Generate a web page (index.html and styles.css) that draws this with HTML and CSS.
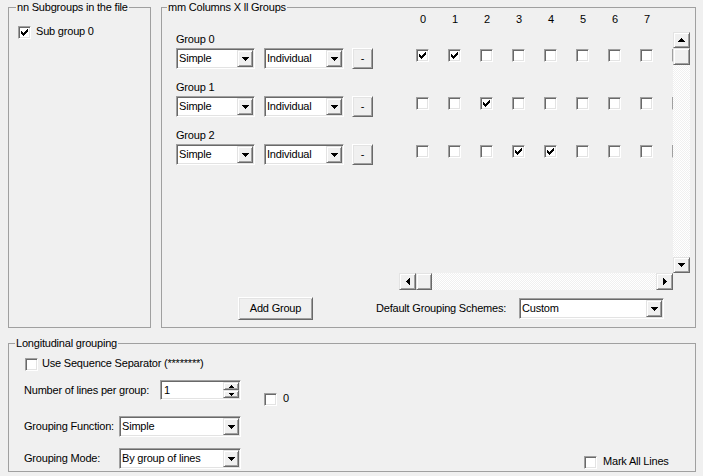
FILE: index.html
```html
<!DOCTYPE html>
<html>
<head>
<meta charset="utf-8">
<title>Grouping</title>
<link rel="stylesheet" href="styles.css">
</head>
<body>
<div class="top">
  <fieldset class="box sub">
    <legend>nn Subgroups in the file</legend>
    <div class="chk subchk"><span class="cb"><svg class="tick" viewBox="0 0 11 11"><path d="M2 4h1v3H2zM3 5h1v3H3zM4 6h1v3H4zM5 5h1v3H5zM6 4h1v3H6zM7 3h1v3H7zM8 2h1v3H8z"/></svg></span><span class="txt">Sub group 0</span></div>
  </fieldset>
  <fieldset class="box cols">
    <legend>mm Columns X ll Groups</legend>
    <div class="main">
      <div class="groups">
        <div class="group">
          <div class="glabel">Group 0</div>
          <div class="gctrl">
            <div class="combo c1"><span class="val">Simple</span><span class="drop"><svg class="ar" viewBox="0 0 7 4"><path d="M0 0h7v1H0zM1 1h5v1H1zM2 2h3v1H2zM3 3h1v1H3z"/></svg></span></div>
            <div class="combo c2"><span class="val">Individual</span><span class="drop"><svg class="ar" viewBox="0 0 7 4"><path d="M0 0h7v1H0zM1 1h5v1H1zM2 2h3v1H2zM3 3h1v1H3z"/></svg></span></div>
            <div class="btn minus">-</div>
          </div>
        </div>
        <div class="group">
          <div class="glabel">Group 1</div>
          <div class="gctrl">
            <div class="combo c1"><span class="val">Simple</span><span class="drop"><svg class="ar" viewBox="0 0 7 4"><path d="M0 0h7v1H0zM1 1h5v1H1zM2 2h3v1H2zM3 3h1v1H3z"/></svg></span></div>
            <div class="combo c2"><span class="val">Individual</span><span class="drop"><svg class="ar" viewBox="0 0 7 4"><path d="M0 0h7v1H0zM1 1h5v1H1zM2 2h3v1H2zM3 3h1v1H3z"/></svg></span></div>
            <div class="btn minus">-</div>
          </div>
        </div>
        <div class="group">
          <div class="glabel">Group 2</div>
          <div class="gctrl">
            <div class="combo c1"><span class="val">Simple</span><span class="drop"><svg class="ar" viewBox="0 0 7 4"><path d="M0 0h7v1H0zM1 1h5v1H1zM2 2h3v1H2zM3 3h1v1H3z"/></svg></span></div>
            <div class="combo c2"><span class="val">Individual</span><span class="drop"><svg class="ar" viewBox="0 0 7 4"><path d="M0 0h7v1H0zM1 1h5v1H1zM2 2h3v1H2zM3 3h1v1H3z"/></svg></span></div>
            <div class="btn minus">-</div>
          </div>
        </div>
      </div>
      <div class="matrix">
        <div class="head"><span>0</span><span>1</span><span>2</span><span>3</span><span>4</span><span>5</span><span>6</span><span>7</span></div>
        <div class="mbody">
          <div class="viewport">
            <div class="mrow">
              <span class="cell"><span class="cb"><svg class="tick" viewBox="0 0 11 11"><path d="M2 4h1v3H2zM3 5h1v3H3zM4 6h1v3H4zM5 5h1v3H5zM6 4h1v3H6zM7 3h1v3H7zM8 2h1v3H8z"/></svg></span></span>
              <span class="cell"><span class="cb"><svg class="tick" viewBox="0 0 11 11"><path d="M2 4h1v3H2zM3 5h1v3H3zM4 6h1v3H4zM5 5h1v3H5zM6 4h1v3H6zM7 3h1v3H7zM8 2h1v3H8z"/></svg></span></span>
              <span class="cell"><span class="cb"></span></span>
              <span class="cell"><span class="cb"></span></span>
              <span class="cell"><span class="cb"></span></span>
              <span class="cell"><span class="cb"></span></span>
              <span class="cell"><span class="cb"></span></span>
              <span class="cell"><span class="cb"></span></span>
              <span class="cell"><span class="cb"></span></span>
            </div>
            <div class="mrow">
              <span class="cell"><span class="cb"></span></span>
              <span class="cell"><span class="cb"></span></span>
              <span class="cell"><span class="cb"><svg class="tick" viewBox="0 0 11 11"><path d="M2 4h1v3H2zM3 5h1v3H3zM4 6h1v3H4zM5 5h1v3H5zM6 4h1v3H6zM7 3h1v3H7zM8 2h1v3H8z"/></svg></span></span>
              <span class="cell"><span class="cb"></span></span>
              <span class="cell"><span class="cb"></span></span>
              <span class="cell"><span class="cb"></span></span>
              <span class="cell"><span class="cb"></span></span>
              <span class="cell"><span class="cb"></span></span>
              <span class="cell"><span class="cb"></span></span>
            </div>
            <div class="mrow">
              <span class="cell"><span class="cb"></span></span>
              <span class="cell"><span class="cb"></span></span>
              <span class="cell"><span class="cb"></span></span>
              <span class="cell"><span class="cb"><svg class="tick" viewBox="0 0 11 11"><path d="M2 4h1v3H2zM3 5h1v3H3zM4 6h1v3H4zM5 5h1v3H5zM6 4h1v3H6zM7 3h1v3H7zM8 2h1v3H8z"/></svg></span></span>
              <span class="cell"><span class="cb"><svg class="tick" viewBox="0 0 11 11"><path d="M2 4h1v3H2zM3 5h1v3H3zM4 6h1v3H4zM5 5h1v3H5zM6 4h1v3H6zM7 3h1v3H7zM8 2h1v3H8z"/></svg></span></span>
              <span class="cell"><span class="cb"></span></span>
              <span class="cell"><span class="cb"></span></span>
              <span class="cell"><span class="cb"></span></span>
              <span class="cell"><span class="cb"></span></span>
            </div>
          </div>
          <div class="vscroll">
            <span class="sbtn vb"><svg class="ar" viewBox="0 0 7 4"><path d="M3 0h1v1H3zM2 1h3v1H2zM1 2h5v1H1zM0 3h7v1H0z"/></svg></span>
            <span class="sbtn vthumb"></span>
            <span class="track"></span>
            <span class="sbtn vb"><svg class="ar" viewBox="0 0 7 4"><path d="M0 0h7v1H0zM1 1h5v1H1zM2 2h3v1H2zM3 3h1v1H3z"/></svg></span>
          </div>
        </div>
        <div class="hscroll">
          <span class="sbtn hb"><svg class="arh" viewBox="0 0 4 7"><path d="M0 3h1v1H0zM1 2h1v3H1zM2 1h1v5H2zM3 0h1v7H3z"/></svg></span>
          <span class="sbtn hthumb"></span>
          <span class="track"></span>
          <span class="sbtn hb"><svg class="arh" viewBox="0 0 4 7"><path d="M0 0h1v7H0zM1 1h1v5H1zM2 2h1v3H2zM3 3h1v1H3z"/></svg></span>
        </div>
      </div>
    </div>
    <div class="foot">
      <div class="btn push">Add Group</div>
      <span class="flabel">Default Grouping Schemes:</span>
      <div class="combo c3"><span class="val">Custom</span><span class="drop"><svg class="ar" viewBox="0 0 7 4"><path d="M0 0h7v1H0zM1 1h5v1H1zM2 2h3v1H2zM3 3h1v1H3z"/></svg></span></div>
    </div>
  </fieldset>
</div>
<fieldset class="box long">
  <legend>Longitudinal grouping</legend>
  <div class="chk seqchk"><span class="cb"></span><span class="txt">Use Sequence Separator (********)</span></div>
  <div class="lrow r2">
    <div class="pair">
      <span class="lab w136">Number of lines per group:</span>
      <div class="spin"><span class="val">1</span><span class="spinbtns"><span class="sbtn sp"><svg class="ars" viewBox="0 0 5 3"><path d="M2 0h1v1H2zM1 1h3v1H1zM0 2h5v1H0z"/></svg></span><span class="sbtn sp"><svg class="ars" viewBox="0 0 5 3"><path d="M0 0h5v1H0zM1 1h3v1H1zM2 2h1v1H2z"/></svg></span></span></div>
    </div>
    <div class="chk zerochk"><span class="cb"></span><span class="txt">0</span></div>
  </div>
  <div class="lrow r3">
    <div class="pair">
      <span class="lab w95">Grouping Function:</span>
      <div class="combo c4"><span class="val">Simple</span><span class="drop"><svg class="ar" viewBox="0 0 7 4"><path d="M0 0h7v1H0zM1 1h5v1H1zM2 2h3v1H2zM3 3h1v1H3z"/></svg></span></div>
    </div>
  </div>
  <div class="lrow r4">
    <div class="pair">
      <span class="lab w95">Grouping Mode:</span>
      <div class="combo c4"><span class="val">By group of lines</span><span class="drop"><svg class="ar" viewBox="0 0 7 4"><path d="M0 0h7v1H0zM1 1h5v1H1zM2 2h3v1H2zM3 3h1v1H3z"/></svg></span></div>
    </div>
    <div class="chk markchk"><span class="cb"></span><span class="txt">Mark All Lines</span></div>
  </div>
</fieldset>
</body>
</html>
```

FILE: styles.css
```css
* { box-sizing: border-box; }
html, body { margin: 0; height: 100%; }
body {
  background: #f0f0f0;
  font: 11px/13px "Liberation Sans", Arial, sans-serif;
  letter-spacing: -0.2px;
  color: #000;
  overflow: hidden;
}

/* group boxes */
.top { display: flex; gap: 10px; padding: 1px 0 0 8px; }
.box { margin: 0; padding: 0; border: 1px solid #a0a0a0; min-width: 0; }
.box > legend { padding: 0 1px; line-height: 12px; }
.sub { width: 143px; height: 327px; }
.sub > legend { margin-left: 7px; }
.cols { width: 535px; height: 327px; }
.cols > legend { margin-left: 5px; }
.long { margin: 9px 0 0 8px; width: 688px; height: 135px; }
.long > legend { margin-left: 6px; }

/* checkbox */
.cb {
  width: 13px; height: 13px; flex: none; display: block;
  background: #fff;
  border: 1px solid; border-color: #a0a0a0 #fff #fff #a0a0a0;
  box-shadow: inset 1px 1px #696969, inset -1px -1px #e3e3e3;
}
.tick { display: block; width: 11px; height: 11px; fill: #000; shape-rendering: crispEdges; }
.chk { display: flex; align-items: flex-start; }
.chk .txt { margin-left: 5px; margin-top: -1px; white-space: nowrap; }
.subchk { margin: 13px 0 0 9px; }
.seqchk { margin: 9px 0 0 16px; }
.seqchk .txt { margin-left: 4px; }
.zerochk { margin: 13px 0 0 23px; }
.zerochk .txt { margin-left: 6px; }
.markchk { margin: 8px 0 0 343px; }
.markchk .txt { margin-left: 6px; }

/* combos */
.combo {
  display: flex; align-items: center; height: 21px; flex: none;
  background: #fff;
  border: 1px solid; border-color: #a0a0a0 #fff #fff #a0a0a0;
  box-shadow: inset 1px 1px #696969, inset -1px -1px #e3e3e3;
}
.combo .val { flex: 1; padding-left: 2px; white-space: nowrap; overflow: hidden; }
.drop {
  width: 16px; height: 17px; margin-right: 1px; flex: none;
  display: flex; align-items: center; justify-content: center;
  background: #f0f0f0;
  border: 1px solid; border-color: #e3e3e3 #696969 #696969 #e3e3e3;
  box-shadow: inset 1px 1px #fff, inset -1px -1px #a0a0a0;
}
.ar { width: 7px; height: 4px; display: block; fill: #000; shape-rendering: crispEdges; }
.arh { width: 4px; height: 7px; display: block; fill: #000; shape-rendering: crispEdges; }
.ars { width: 5px; height: 3px; display: block; fill: #000; shape-rendering: crispEdges; }
.c1 { width: 79px; }
.c2 { width: 80px; margin-left: 9px; }
.c3 { width: 145px; }
.c4 { width: 122px; }

/* buttons */
.btn {
  display: flex; align-items: center; justify-content: center; flex: none;
  background: #f0f0f0;
  border: 1px solid; border-color: #fff #696969 #696969 #fff;
  box-shadow: inset 1px 1px #e3e3e3, inset -1px -1px #a0a0a0;
}
.minus { width: 21px; height: 21px; margin-left: 8px; padding-bottom: 1px; }
.push { width: 75px; height: 23px; }

/* columns matrix */
.main { display: flex; padding-left: 14px; }
.groups { width: 223px; padding-top: 20px; flex: none; }
.group { margin-bottom: 12px; }
.glabel { height: 13px; margin-bottom: 2px; }
.gctrl { display: flex; }
.matrix { width: 291px; flex: none; }
.head { display: flex; width: 274px; height: 13px; overflow: hidden; padding-left: 8px; margin-bottom: 6px; }
.head span { width: 32px; flex: none; text-align: center; }
.mbody { display: flex; height: 241px; }
.viewport { width: 274px; height: 241px; overflow: hidden; padding: 17px 0 0 8px; flex: none; }
.mrow { display: flex; height: 48px; }
.cell { width: 32px; flex: none; padding-left: 9px; }

.sbtn {
  display: flex; align-items: center; justify-content: center; flex: none;
  background: #f0f0f0;
  border: 1px solid; border-color: #e3e3e3 #696969 #696969 #e3e3e3;
  box-shadow: inset 1px 1px #fff, inset -1px -1px #a0a0a0;
}
.track {
  flex: 1;
  background: repeating-conic-gradient(#fff 0 25%, #f0f0f0 0 50%) 0 0 / 2px 2px;
}
.vscroll { width: 17px; display: flex; flex-direction: column; }
.vb { height: 16px; }
.vthumb { height: 17px; }
.hscroll { width: 274px; height: 17px; display: flex; }
.hb { width: 17px; }
.hthumb { width: 16px; }

.foot { display: flex; align-items: center; margin-top: 7px; padding-left: 76px; }
.flabel { width: 143px; margin-left: 63px; white-space: nowrap; }

/* longitudinal */
.lrow { display: flex; align-items: flex-start; padding-left: 15px; }
.pair { display: flex; align-items: center; }
.r2 { margin-top: 9px; }
.r3 { margin-top: 10px; }
.r4 { margin-top: 11px; }
.lab { white-space: nowrap; flex: none; }
.w136 { width: 136px; }
.w95 { width: 95px; }
.spin {
  width: 81px; height: 20px; display: flex; align-items: center;
  background: #fff;
  border: 1px solid; border-color: #a0a0a0 #fff #fff #a0a0a0;
  box-shadow: inset 1px 1px #696969, inset -1px -1px #e3e3e3;
}
.spin .val { flex: 1; padding-left: 3px; }
.spinbtns { display: flex; flex-direction: column; width: 16px; margin-right: 1px; }
.sp { height: 8px; }
```
